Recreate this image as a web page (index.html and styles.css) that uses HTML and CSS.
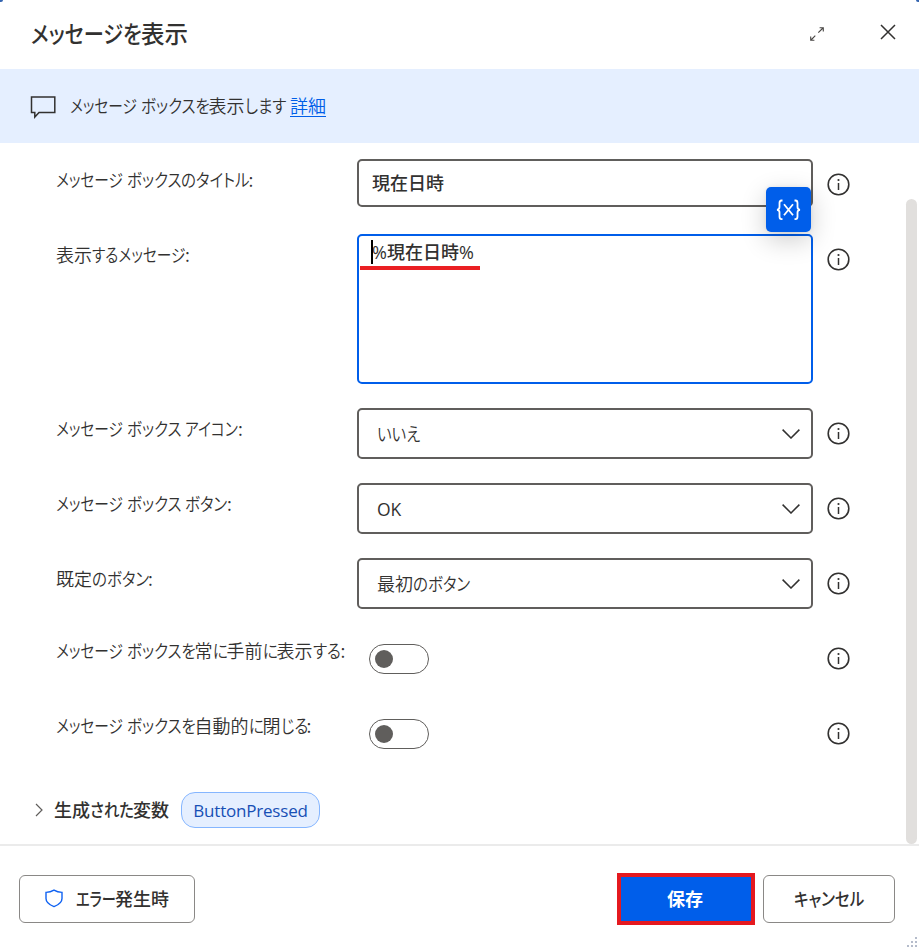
FILE: index.html
```html
<!DOCTYPE html>
<html lang="ja">
<head>
<meta charset="utf-8">
<title>メッセージを表示</title>
<link rel="stylesheet" href="styles.css">
</head>
<body>
<svg width="0" height="0" class="defs">
  <symbol id="info" viewBox="0 0 24 24"><circle cx="12.5" cy="12.5" r="10.3" fill="none" stroke="#323130" stroke-width="1.6"/><path d="M12.5 11V18" stroke="#323130" stroke-width="1.5"/><circle cx="12.5" cy="8" r="1.1" fill="#323130"/></symbol>
  <symbol id="chev" viewBox="0 0 18 10"><path d="M.6.6 9 9 17.4.6" fill="none" stroke="#323130" stroke-width="1.5"/></symbol>
</svg>
<div class="dialog">
  <i class="corner tl"></i><i class="corner tr"></i>
  <header class="head">
    <h1><span class="k" style="--w:110px">メッセージを</span>表示</h1>
    <svg class="expand" width="16" height="16" viewBox="0 0 16 16" fill="none" stroke="#484644" stroke-width="1.1"><path d="M9.3 6.7 14 2M10.6 1.7H14.3V5.4M6.3 9.7 2 14M1.7 10.6V14.3H5.4"/></svg>
    <svg class="close" width="16" height="16" viewBox="0 0 16 16" fill="none" stroke="#323130" stroke-width="1.5"><path d="M1 1 15 15M15 1 1 15"/></svg>
  </header>
  <div class="banner">
    <svg width="26" height="23" viewBox="0 0 26 23" fill="none" stroke="#323130" stroke-width="1.5"><path d="M1.5 1H24.8V16.5H9L4.8 21V16.5H1.5Z"/></svg>
    <p><span class="k m" style="--w:66px">メッセージ</span><b class="sp"></b><span class="k" style="--w:68px">ボックスを</span>表示<span class="k" style="--w:41px">します</span><b class="sp"></b><a>詳細</a></p>
  </div>
  <main class="body">
    <div class="row">
      <label><span class="k m" style="--w:66px">メッセージ</span><b class="sp"></b><span class="k" style="--w:54px">ボックス</span><span class="k" style="--w:68px">のタイトル</span>:</label>
      <div class="field input">現在日時<span class="varbtn"><svg width="25" height="22" viewBox="0 0 25 22" fill="none" stroke="#fff" stroke-width="1.8"><path d="M6.5 1.5H5.5Q3.5 1.5 3.5 4V8Q3.5 10.5 1 10.8Q3.5 11 3.5 13.5V17.5Q3.5 20.2 5.5 20.2H6.5M18.5 1.5H19.5Q21.5 1.5 21.5 4V8Q21.5 10.5 24 10.8Q21.5 11 21.5 13.5V17.5Q21.5 20.2 19.5 20.2H18.5M8 5.3 17 16.3M17 5.3 8 16.3"/></svg></span></div>
      <svg class="info"><use href="#info"/></svg>
    </div>
    <div class="row tall">
      <label>表示<span class="k m" style="--w:93px">するメッセージ</span>:</label>
      <div class="field area"><span class="caret"></span><span class="pct">%</span>現在日時<span class="pct">%</span><span class="mark"></span></div>
      <svg class="info"><use href="#info"/></svg>
    </div>
    <div class="row">
      <label><span class="k m" style="--w:66px">メッセージ</span><b class="sp"></b><span class="k" style="--w:54px">ボックス</span><b class="sp"></b><span class="k m" style="--w:53px">アイコン</span>:</label>
      <div class="field select"><span class="k" style="--w:44px">いいえ</span><svg width="18" height="10"><use href="#chev"/></svg></div>
      <svg class="info"><use href="#info"/></svg>
    </div>
    <div class="row">
      <label><span class="k m" style="--w:66px">メッセージ</span><b class="sp"></b><span class="k" style="--w:54px">ボックス</span><b class="sp"></b><span class="k" style="--w:42px">ボタン</span>:</label>
      <div class="field select"><span class="latin">OK</span><svg width="18" height="10"><use href="#chev"/></svg></div>
      <svg class="info"><use href="#info"/></svg>
    </div>
    <div class="row">
      <label>既定<span class="k" style="--w:56px">のボタン</span>:</label>
      <div class="field select"><span>最初<span class="k" style="--w:57px">のボタン</span></span><svg width="18" height="10"><use href="#chev"/></svg></div>
      <svg class="info"><use href="#info"/></svg>
    </div>
    <div class="row switch">
      <label><span class="k m" style="--w:66px">メッセージ</span><b class="sp"></b><span class="k" style="--w:68px">ボックスを</span>常<span class="k" style="--w:14px">に</span>手前<span class="k" style="--w:14px">に</span>表示<span class="k" style="--w:28px">する</span>:</label>
      <div class="toggle"><i></i></div>
      <svg class="info"><use href="#info"/></svg>
    </div>
    <div class="row switch">
      <label><span class="k m" style="--w:66px">メッセージ</span><b class="sp"></b><span class="k" style="--w:68px">ボックスを</span>自動的<span class="k" style="--w:14px">に</span>閉<span class="k" style="--w:26px">じる</span>:</label>
      <div class="toggle"><i></i></div>
      <svg class="info"><use href="#info"/></svg>
    </div>
    <div class="vars">
      <svg width="8" height="14" viewBox="0 0 8 14" fill="none" stroke="#605e5c" stroke-width="1.2"><path d="M1 1 7 7 1 13"/></svg>
      <strong>生成<span class="k" style="--w:43px">された</span>変数</strong>
      <span class="chip">ButtonPressed</span>
    </div>
    <div class="scroll"></div>
  </main>
  <footer class="foot">
    <button class="btn error"><svg width="18" height="19" viewBox="0 0 18 19" fill="none" stroke="#0f62f2" stroke-width="1.4"><path d="M9 1.2Q5.5 3.4 1 3.4V9.5Q1 14.5 9 17.6Q17 14.5 17 9.5V3.4Q12.5 3.4 9 1.2Z"/></svg><span><span class="k e" style="--w:39px">エラー</span>発生時</span></button>
    <button class="btn save">保存</button>
    <button class="btn cancel"><span class="k" style="--w:71px">キャンセル</span></button>
  </footer>
  <svg class="grip" width="13" height="13" fill="#b5bccb"><path d="M9 1h2v2H9zM5 5h2v2H5zM9 5h2v2H9zM1 9h2v2H1zM5 9h2v2H5zM9 9h2v2H9z"/></svg>
</div>
</body>
</html>
```
FILE: styles.css
```css
* { box-sizing: border-box; }
body {
  margin: 0;
  font: 18px/26px "Noto Sans CJK JP", sans-serif;
  font-weight: 350;
  color: #323130;
  background: #fff;
}
.defs { position: absolute; }
.dialog { position: relative; width: 919px; height: 949px; display: flex; flex-direction: column; overflow: hidden; }
.corner { position: absolute; top: 0; width: 3px; height: 2px; background: #3565b0; }
.tl { left: 0; border-radius: 0 0 3px 0; }
.tr { right: 0; border-radius: 0 0 0 3px; }

/* Kana runs are set narrower than the kanji around them. */
.k {
  display: inline-block;
  width: var(--w);
  white-space: nowrap;
  font-feature-settings: "palt";
  transform: scaleX(var(--s, .86));
  transform-origin: 0 50%;
}
.m { --s: .815; }
.e { --s: .79; }
.sp { display: inline-block; width: 4.5px; }

.head { height: 69px; display: flex; align-items: center; padding: 0 23px 4px 31px; }
h1 { flex: 1; margin: 0; font-size: 23.5px; line-height: 34px; font-weight: 500; white-space: nowrap; }
.expand { margin: 2px 55px 0 0; }
.close { margin-top: -1px; }
.banner { height: 74px; display: flex; align-items: center; gap: 14px; padding-left: 30px; background: #e5efff; }
.banner svg { margin-top: 2px; }
.banner p { margin: -3px 0 0; white-space: nowrap; }
.banner a { color: #005ee8; text-decoration: underline; text-underline-offset: 3px; text-decoration-thickness: 1px; }

.body { position: relative; height: 701px; padding-top: 16px; }
.row { height: 75px; display: grid; grid-template-columns: 301px 456px 24px; padding-left: 56px; align-items: start; }
.row.tall { height: 174px; }
label { padding-top: 7px; white-space: nowrap; }
.switch label { padding-top: 4px; }
.info { width: 24px; height: 24px; margin: 13px 0 0 13px; }
.field { position: relative; border: 2px solid #605e5c; border-radius: 5px; background: #fff; }
.input { height: 48px; padding: 8px 13px; font-weight: 500; }
.area { height: 150px; padding: 2px 13px; border-color: #005eea; font-weight: 500; }
.select { height: 51px; display: flex; align-items: center; justify-content: space-between; padding: 0 11px 0 18px; }
.select > span { margin-top: -2px; }
.pct { font-family: "Open Sans"; font-size: 18px; font-weight: 400; }
.caret { position: absolute; left: 12px; top: 4px; width: 2px; height: 24px; background: #000; }
.mark { position: absolute; left: 1px; top: 30px; width: 120px; height: 4px; background: #ea1f23; }
.varbtn { position: absolute; z-index: 2; left: 407px; top: 26px; width: 45px; height: 45px; display: grid; place-items: center; border-radius: 5px; background: #005eea; box-shadow: 0 8px 26px rgba(0,0,0,.2), 0 0 4px rgba(0,0,0,.08); }
.select > .latin { margin-top: 1px; font-family: "Open Sans"; font-size: 17.5px; font-weight: 400; }
.toggle { width: 60px; height: 30px; margin: 11px 0 0 12px; border: 1.5px solid #605e5c; border-radius: 15px; padding: 5px; }
.toggle i { display: block; width: 18px; height: 18px; border-radius: 50%; background: #605e5c; }
.vars { display: flex; align-items: center; padding: 9px 0 0 35px; }
.vars strong { margin: -2px 12px 0 11px; font-weight: 500; white-space: nowrap; }
.chip { width: 139px; height: 36px; border: 1px solid #85b6ff; border-radius: 14px; background: #e5efff; color: #174fb5; font: 17px/35px "Open Sans"; letter-spacing: -.2px; text-align: center; }
.scroll { position: absolute; right: 2px; top: 56px; width: 11px; height: 645px; border-radius: 6px; background: #e1dfdd; }

.foot { flex: 1; display: flex; align-items: flex-start; border-top: 2px solid #ebebeb; padding: 29px 24px 0 19px; }
.btn { height: 48px; border: 1px solid #8a8886; border-radius: 6px; background: #fff; color: #323130; font: 500 18px/26px "Noto Sans CJK JP", sans-serif; display: flex; align-items: center; justify-content: center; padding: 0 0 2px; white-space: nowrap; }
.error { width: 176px; gap: 13px; margin-right: auto; }
.error svg { margin-top: 1px; }
.save { width: 138px; height: 52px; margin: -2px 8px 0 0; padding-right: 2px; border: 4.5px solid #e5191f; border-radius: 0; background: #005eea; color: #fff; font-weight: 700; }
.cancel { width: 132px; }
.grip { position: absolute; right: 0; bottom: 0; }
```
